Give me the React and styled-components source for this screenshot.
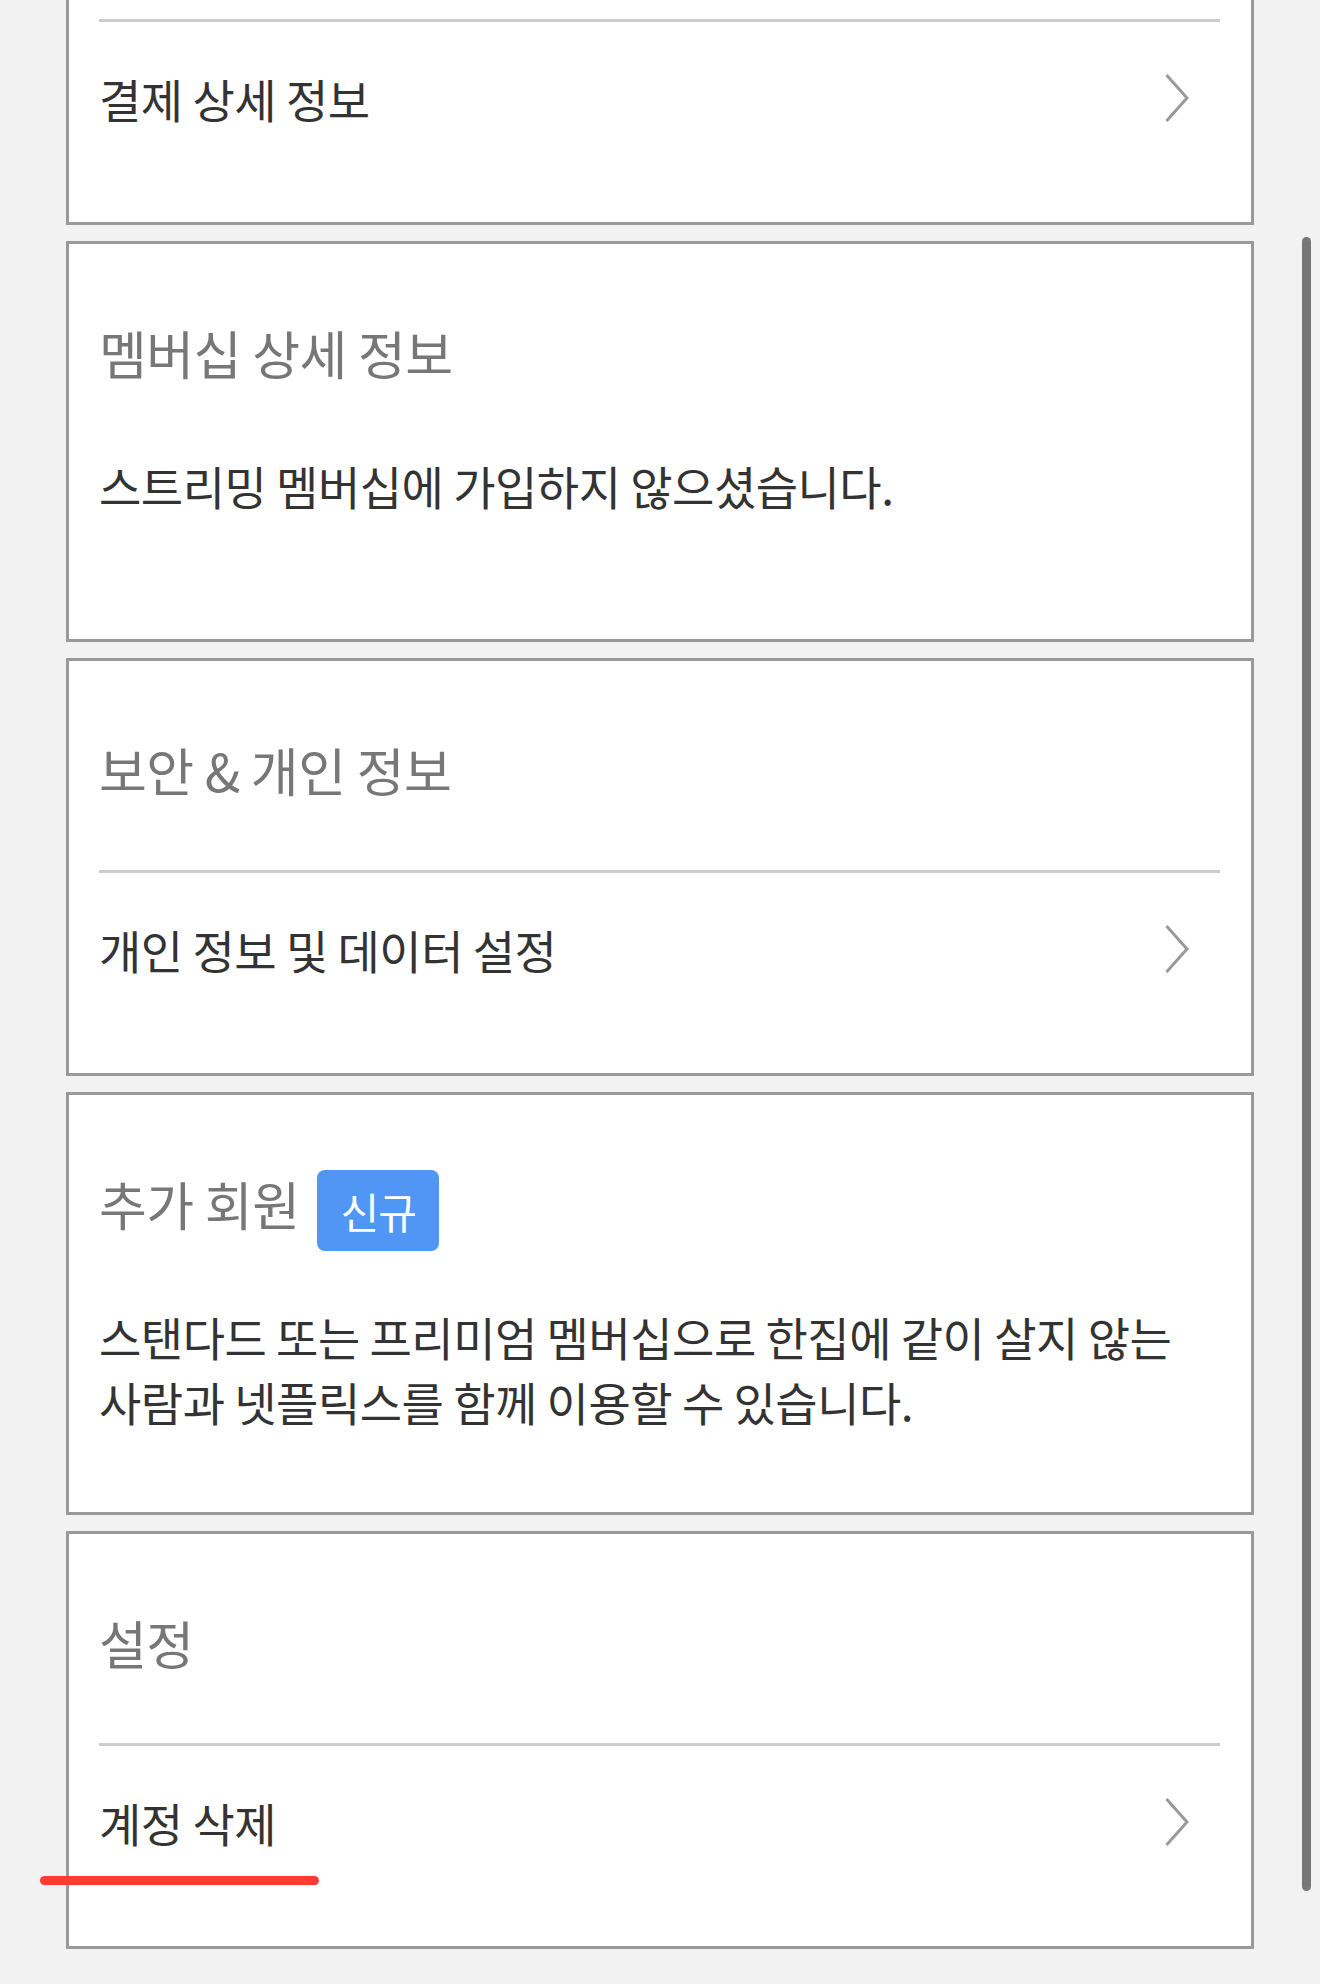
import React from 'react';
import styled, { createGlobalStyle } from 'styled-components';

const GlobalStyle = createGlobalStyle`
  html, body {
    margin: 0;
    padding: 0;
    background: #f2f2f2;
  }
  body {
    font-family: "Noto Sans CJK KR", "Noto Sans", sans-serif;
    -webkit-font-smoothing: antialiased;
  }
`;

const Page = styled.main`
  padding: 0 66px 33px;
  display: flex;
  flex-direction: column;
  gap: 16px;
`;

const Card = styled.section`
  background: #fff;
  border: 3px solid #999;
  border-top-width: ${(p) => (p.$cut ? '0' : '3px')};
  padding: ${(p) => (p.$cut ? '19px' : '0')} 31px ${(p) => p.$bottom || 0}px 30px;
`;

const Header = styled.div`
  padding: 77px 0 68px;
`;

const TitleRow = styled.div`
  display: flex;
  align-items: center;
  gap: 17px;
  height: 64px;
`;

const Title = styled.h2`
  margin: 0;
  font-size: 52px;
  font-weight: 400;
  line-height: 64px;
  letter-spacing: -0.5px;
  color: #777;
`;

const Badge = styled.span`
  display: inline-flex;
  align-items: center;
  justify-content: center;
  height: 81px;
  margin-top: 12px;
  padding: 0 23px 0 24px;
  border-radius: 8px;
  background: #5096f5;
  color: #fff;
  font-size: 42px;
  letter-spacing: -1px;
`;

const Text = styled.p`
  margin: 0;
  font-size: 46px;
  line-height: 65px;
  letter-spacing: -0.5px;
  color: #333;
`;

const Row = styled.a`
  position: relative;
  display: flex;
  align-items: center;
  justify-content: space-between;
  padding: 46px 31px 94px 0;
  border-top: 3px solid #ccc;
  color: #333;
  text-decoration: none;
  font-size: 46px;
  line-height: 60px;
  letter-spacing: -0.5px;
`;

const Marker = styled.span`
  position: absolute;
  left: -59px;
  top: 130px;
  width: 279px;
  height: 9px;
  border-radius: 5px;
  background: #ff3b33;
`;

const Scrollbar = styled.div`
  position: fixed;
  top: 237px;
  right: 9px;
  width: 9px;
  height: 1654px;
  border-radius: 5px;
  background: #777;
`;

const Chevron = () => (
  <svg width="24" height="48" viewBox="0 0 24 48" fill="none">
    <polyline points="1.5,1 22,24 1.5,47" stroke="#999" strokeWidth="3" />
  </svg>
);

const LinkRow = ({ label, marked }) => (
  <Row href="#">
    <span>{label}</span>
    <Chevron />
    {marked && <Marker />}
  </Row>
);

const App = () => {
  return (
    <>
      <GlobalStyle />
      <Page>
        <Card $cut>
          <LinkRow label="결제 상세 정보" />
        </Card>

        <Card $bottom={121}>
          <Header>
            <TitleRow>
              <Title>멤버십 상세 정보</Title>
            </TitleRow>
          </Header>
          <Text>스트리밍 멤버십에 가입하지 않으셨습니다.</Text>
        </Card>

        <Card>
          <Header>
            <TitleRow>
              <Title>보안 &amp; 개인 정보</Title>
            </TitleRow>
          </Header>
          <LinkRow label="개인 정보 및 데이터 설정" />
        </Card>

        <Card $bottom={78}>
          <Header>
            <TitleRow>
              <Title>추가 회원</Title>
              <Badge>신규</Badge>
            </TitleRow>
          </Header>
          <Text>
            스탠다드 또는 프리미엄 멤버십으로 한집에 같이 살지 않는
            <br />
            사람과 넷플릭스를 함께 이용할 수 있습니다.
          </Text>
        </Card>

        <Card>
          <Header>
            <TitleRow>
              <Title>설정</Title>
            </TitleRow>
          </Header>
          <LinkRow label="계정 삭제" marked />
        </Card>
      </Page>
      <Scrollbar />
    </>
  );
};

export default App;
